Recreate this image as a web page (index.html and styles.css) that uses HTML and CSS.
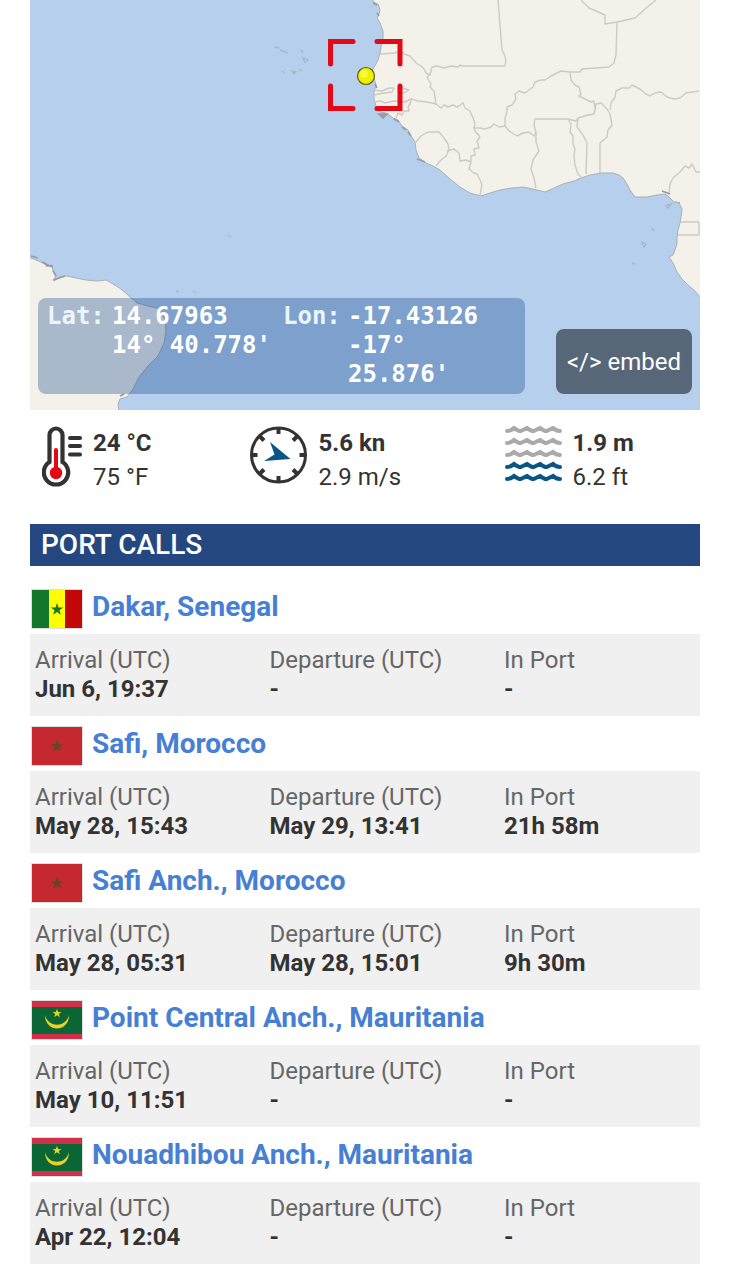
FILE: index.html
```html
<!DOCTYPE html>
<html lang="en">

<head>
    <meta charset="UTF-8">
    <meta name="viewport" content="width=device-width, initial-scale=1.0">
    <title>Vessel Position and Port Calls</title>
    <link rel="stylesheet" href="styles.css">
</head>

<body>

    <!-- Shared flag drawings -->
    <svg class="symbols" width="0" height="0" aria-hidden="true">
        <symbol id="flag-sn" viewBox="0 0 50 38">
            <rect width="17" height="38" fill="#12762b" />
            <rect x="17" width="16" height="38" fill="#ffff00" />
            <rect x="33" width="17" height="38" fill="#c20808" />
            <path d="M25 13l1.5 4.500h4.700l-3.800 2.800 1.500 4.500-3.900-2.800-3.900 2.800 1.500-4.500-3.800-2.800h4.700z" fill="#12762b" />
        </symbol>
        <symbol id="flag-ma" viewBox="0 0 50 38">
            <rect width="50" height="38" fill="#c5282f" />
            <path d="M25 14.500l2.800 8.500-7.300-5.200h9l-7.300 5.200z" fill="#8a3426" stroke="#5c4a28" stroke-width="1.200" />
        </symbol>
        <symbol id="flag-mr" viewBox="0 0 50 38">
            <rect width="50" height="38" fill="#d0304a" />
            <rect y="6" width="50" height="27" fill="#0a6634" />
            <path d="M13 14c0 18 24 18 24 0-3 13-21 13-24 0z" fill="#f0d020" />
            <path d="M25 8l1.200 3h3.200l-2.600 2 1 3.200-2.800-2-2.800 2 1-3.200-2.600-2h3.200z" fill="#f0d020" />
        </symbol>
    </svg>

    <main>
        <div class="map">
            <svg class="map-image" viewBox="30 0 670 410" role="img" aria-label="Map of the Atlantic and West Africa">
                <rect x="30" width="670" height="410" fill="#b5cfec" />

                <!-- Africa -->
                <path class="land" d="M371 -2L375 3 378 4 380 10 379 14 377 18 380 23 383 31 383 38 381 47 380 53 378 60 376 64 373 69 370 74 374 78 376 85 374 92 374 99 376 106 380 112 386 113 393 118 398 120 402 126 408 130 411 136 415 142 416 150 419 158 426 163 433 166 440 170 450 179 460 187 470 193 481 196 490 193 500 190 512 188 523 187 533 189 545 192 554 188 563 184 574 181 581 178 590 175 601 173 613 173 619 175 623 178 627 184 630 190 635 197 641 197 647 197 657 195 665 194 669 197 674 202 679 203 682 209 681 217 680 223 678 230 677 237 677 244 675 250 673 255 669 257 673 263 677 272 682 279 688 285 694 290 702 299 702 -2Z" />
                <!-- South America -->
                <path class="land" d="M28 257L36 260 43 263 47 266 52 265 53 271 56 275 54 281 60 277 67 276 76 278 86 280 97 281 106 280 113 284 121 289 129 296 137 303 148 306 158 308 165 319 166 331 164 343 158 356 148 366 139 377 133 389 127 397 120 399 118 404 119 412 28 412Z" />

                <!-- Country borders -->
                <g class="borders">
                    <path d="M380 54L395 53 401 51 404 54 410 56 416 63 421 66 424 69 426 73 430 75 432 67 437 66 444 68 451 66 458 67 460 65 462 66 505 66 506 60 504 54 502 50 498 0" />
                    <path d="M430 75L427 77 431 84 430 87 434 91 435 97 436 104 441 108 444 105 448 107 453 105 457 107 459 106 463 103 465 108 470 111 473 118 475 123 474 128 480 128 485 129 491 127 494 124 499 127 505 126" />
                    <path d="M374 102L381 101 385 103 394 101 405 102 411 99 418 101 427 102 436 104" />
                    <path d="M374 90L382 91 389 88 394 88 392 92 385 93 378 94 375 95M399 87L409 90 404 93 398 91" />
                    <path d="M411 100L410 104 408 107 409 111 404 111 402 115 398 113 396 118" />
                    <path d="M416 142L421 136 428 132 439 132 444 138 448 144 449 150 446 156 440 161 436 166" />
                    <path d="M447 151L454 149 459 153 460 161 466 160 471 162 471 156 475 155 474 149 479 148 477 141 480 137 475 131 474 127M471 162L469 169 474 173 477 174 480 180 482 185 480 195" />
                    <path d="M505 126L505 118 507 112 507 107 512 105 516 99 515 94 519 91 525 93 533 87 535 82 541 80 545 80 551 76 561 71 570 72 580 72 582 69 609 67 614 63 616 55 617 22" />
                    <path d="M581 0L585 4 589 8 596 11 605 15 605 24 617 22 635 18 645 9 656 0" />
                    <path d="M570 72L571 80 575 85 579 87 581 94 579 96 585 99 591 102 594 101 595 110 594 114 588 115 578 118 576 121 568 119 535 119 534 125 536 132 534 136 529 132 523 133 517 136 509 131 505 126" />
                    <path d="M536 132L536 142 539 151 533 160 531 169 534 178 536 188M568 119L571 124 570 132 573 136 573 144 575 149 574 156 575 165 578 174 582 178M578 119L577 127 583 135 587 143 586 174" />
                    <path d="M595 110L596 104 601 103 607 109 610 114 612 125 608 130 607 137 600 143 600 173M610 110L611 103 615 97 616 91 622 88 629 88 632 85 640 89 646 94 650 96 655 93 661 92 667 97 674 99 680 98 686 93 699 91" />
                    <path d="M669 194L670 184 673 178 680 172 685 166 689 168 692 164 696 172 700 172M681 222L699 222M678 235L699 235 699 222" />
                </g>

                <!-- Rugged shores -->
                <path class="shore" d="M373 3l4 2M377 13l2 3M375 84l2 4M379 114l8 0-4 4zM394 119l5 3M402 127l4 3M408 132l3 4M417 159l8 3M662 191l8 3M31 256l7 2M42 262l10 5M46 266l7 0M53 271l3 5M53 280l12-4M120 396l4-2" />
                <!-- Islands -->
                <path class="islands" d="M275 47l4 1M280 50l8 3M301 50l2 3M303 58l5 2-3 2zM292 71l4 1-2 2zM282 71l3 2M299 69l3 2M666 206l5-2-3 4zM675 202l5 1M652 228l2 3M642 242l4 2-2 3zM632 263l3 1M228 235l3 2M176 291l3 1M193 291l3 2" />

                <!-- Vessel marker -->
                <path class="target" d="M330.500 64V41.500H353M377 41.500h23V64M400 86v22.500h-23M353 108.500h-22.500V86" />
                <circle cx="366" cy="76" r="8.500" fill="#eeee00" stroke="#5e5e08" stroke-width="1.200" />
                <circle cx="364" cy="74" r="4" fill="#f8f83c" />
            </svg>

            <dl class="position">
                <dt>Lat:</dt>
                <dd>14.67963<br>14° 40.778'</dd>
                <dt>Lon:</dt>
                <dd>-17.43126<br>-17° 25.876'</dd>
            </dl>
            <button type="button" class="embed">&lt;/&gt; embed</button>
        </div>

        <section class="weather">
            <div class="reading">
                <svg width="40" height="62" viewBox="0 0 40 62" aria-hidden="true">
                    <path d="M7.500 36V9a6.500 6.500 0 0 1 13 0V36a12.200 12.200 0 1 1-13 0z" fill="#fff" stroke="#333" stroke-width="4.200" />
                    <path d="M14 24v22" stroke="#e30613" stroke-width="4" stroke-linecap="round" />
                    <circle cx="14" cy="47" r="6.200" fill="#e30613" />
                    <path d="M28 12h10M28 20h10M28 28.500h10" stroke="#333" stroke-width="4" stroke-linecap="round" />
                </svg>
                <p><strong>24 °C</strong><br>75 °F</p>
            </div>
            <div class="reading">
                <svg width="57" height="58" viewBox="0 0 57 58" aria-hidden="true">
                    <circle cx="28.500" cy="29" r="27" fill="none" stroke="#333" stroke-width="3" />
                    <path d="M28.500 2v6M28.500 50v6M1.500 29h6M49.500 29h6M9.500 10l4.500 4.500M47.500 10L43 14.500M9.500 48l4.500-4.500M47.500 48L43 43.500" stroke="#333" stroke-width="4" />
                    <path d="M20 16L40.500 33 14 35 24.500 28.500z" fill="#0b5589" />
                </svg>
                <p><strong>5.6 kn</strong><br>2.9 m/s</p>
            </div>
            <div class="reading">
                <svg width="57" height="58" viewBox="0 0 57 58" fill="none" stroke-width="4" stroke-linecap="round" aria-hidden="true">
                    <g stroke="#aaa">
                        <path id="wave" d="M2 5q4 0 7-3 5 3.500 6.500 3T22 2q5 3.500 6.500 3T35 2q5 3.500 6.500 3T48 2q3 3 7 3" />
                        <use href="#wave" y="12" />
                        <use href="#wave" y="24" />
                    </g>
                    <g stroke="#0b5583">
                        <use href="#wave" y="36" />
                        <use href="#wave" y="48" />
                    </g>
                </svg>
                <p><strong>1.9 m</strong><br>6.2 ft</p>
            </div>
        </section>

        <section class="port-calls">
            <h2>PORT CALLS</h2>

            <article class="port">
                <h3><svg class="flag" role="img" aria-label="Senegal"><use href="#flag-sn" /></svg><a href="#">Dakar, Senegal</a></h3>
                <dl class="details">
                    <div><dt>Arrival (UTC)</dt><dd>Jun 6, 19:37</dd></div>
                    <div><dt>Departure (UTC)</dt><dd>-</dd></div>
                    <div><dt>In Port</dt><dd>-</dd></div>
                </dl>
            </article>

            <article class="port">
                <h3><svg class="flag" role="img" aria-label="Morocco"><use href="#flag-ma" /></svg><a href="#">Safi, Morocco</a></h3>
                <dl class="details">
                    <div><dt>Arrival (UTC)</dt><dd>May 28, 15:43</dd></div>
                    <div><dt>Departure (UTC)</dt><dd>May 29, 13:41</dd></div>
                    <div><dt>In Port</dt><dd>21h 58m</dd></div>
                </dl>
            </article>

            <article class="port">
                <h3><svg class="flag" role="img" aria-label="Morocco"><use href="#flag-ma" /></svg><a href="#">Safi Anch., Morocco</a></h3>
                <dl class="details">
                    <div><dt>Arrival (UTC)</dt><dd>May 28, 05:31</dd></div>
                    <div><dt>Departure (UTC)</dt><dd>May 28, 15:01</dd></div>
                    <div><dt>In Port</dt><dd>9h 30m</dd></div>
                </dl>
            </article>

            <article class="port">
                <h3><svg class="flag" role="img" aria-label="Mauritania"><use href="#flag-mr" /></svg><a href="#">Point Central Anch., Mauritania</a></h3>
                <dl class="details">
                    <div><dt>Arrival (UTC)</dt><dd>May 10, 11:51</dd></div>
                    <div><dt>Departure (UTC)</dt><dd>-</dd></div>
                    <div><dt>In Port</dt><dd>-</dd></div>
                </dl>
            </article>

            <article class="port">
                <h3><svg class="flag" role="img" aria-label="Mauritania"><use href="#flag-mr" /></svg><a href="#">Nouadhibou Anch., Mauritania</a></h3>
                <dl class="details">
                    <div><dt>Arrival (UTC)</dt><dd>Apr 22, 12:04</dd></div>
                    <div><dt>Departure (UTC)</dt><dd>-</dd></div>
                    <div><dt>In Port</dt><dd>-</dd></div>
                </dl>
            </article>
        </section>
    </main>

</body>

</html>
```

FILE: styles.css
```css
* {
    box-sizing: border-box;
}

body {
    margin: 0;
    padding: 0 30px;
    background: #fff;
    color: #333;
    font-family: Roboto, Arial, sans-serif;
    font-size: 24px;
}

h2,
h3,
p,
dl,
dd {
    margin: 0;
}

.symbols {
    position: absolute;
}

/* Map */
.map {
    position: relative;
}

.map-image {
    display: block;
    width: 100%;
    height: auto;
}

.land {
    fill: #f3f1e9;
    stroke: #a9b0b6;
    stroke-width: 1;
}

.borders {
    fill: none;
    stroke: #cbcac6;
    stroke-width: 1.4;
    stroke-linejoin: round;
}

.shore {
    fill: #959ca4;
    stroke: #959ca4;
    stroke-width: 1.6;
}

.islands {
    fill: #e4e8e8;
    stroke: #a3b8cc;
    stroke-width: 1.4;
}

.target {
    fill: none;
    stroke: #e30a17;
    stroke-width: 5;
    stroke-linecap: round;
}

.position {
    position: absolute;
    left: 8px;
    right: 175px;
    bottom: 16px;
    display: grid;
    grid-template-columns: 65px 171px 65px 1fr;
    padding: 4px 7px 5px 9px;
    border-radius: 8px;
    background: rgba(0, 54, 133, 0.3);
    color: #fff;
    font-family: "DejaVu Sans Mono", monospace;
    font-weight: bold;
    line-height: 29px;
}

.position dt {
    color: #e9f6fd;
}

.embed {
    position: absolute;
    right: 8px;
    bottom: 16px;
    height: 65px;
    padding: 0 11px;
    border: 0;
    border-radius: 8px;
    background: #586777;
    color: #fff;
    font: inherit;
}

/* Weather */
.weather {
    display: grid;
    grid-template-columns: 32fr 39fr 30fr;
    padding: 16px 0 30px 12px;
}

.reading {
    display: flex;
    gap: 11px;
    line-height: 34px;
}

/* Port calls */
.port-calls h2 {
    margin-bottom: 13px;
    padding: 0 11px;
    background: #24477f;
    color: #fff;
    font-size: 28px;
    font-weight: 500;
    line-height: 42px;
}

.port {
    padding-top: 10px;
}

.port h3 {
    display: flex;
    align-items: flex-start;
    gap: 9px;
    padding: 0 0 5px 1px;
    font-size: 28px;
    line-height: 35px;
}

.flag {
    width: 52px;
    height: 40px;
    flex: none;
    border: 1px solid #ddd;
}

.port h3 a {
    color: #467fd3;
    text-decoration: none;
}

.details {
    display: grid;
    grid-template-columns: 35% 35% 30%;
    padding: 12px 0;
    background: #f0f0f0;
    line-height: 29px;
}

.details div {
    padding: 0 5px;
}

.details dt {
    color: #666;
}

.details dd {
    font-weight: bold;
}
```
